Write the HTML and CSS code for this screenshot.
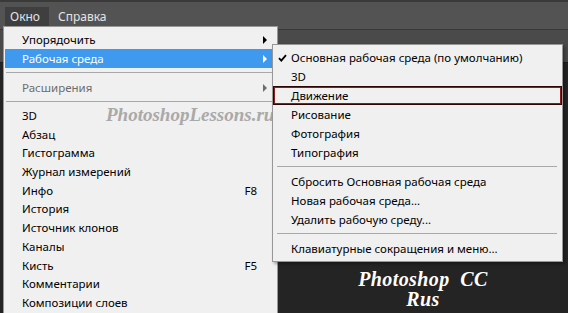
FILE: index.html
```html
<!DOCTYPE html>
<html lang="ru">
<head>
    <meta charset="UTF-8">
    <meta name="viewport" content="width=device-width, initial-scale=1.0">
    <title>Окно</title>
    <link rel="stylesheet" href="styles.css">
</head>
<body>
    <!-- App menu bar -->
    <div class="menubar">
        <span class="menubar-item active">Окно</span>
        <span class="menubar-item">Справка</span>
    </div>
    <div class="options-bar"></div>

    <!-- Document area -->
    <div class="workspace">
        <div class="caption">Photoshop&nbsp; CC</div>
        <div class="caption">Rus</div>
    </div>

    <!-- Window menu -->
    <ul class="menu main-menu">
        <li class="item has-sub">Упорядочить</li>
        <li class="item has-sub selected">Рабочая среда</li>
        <li class="sep"></li>
        <li class="item has-sub disabled">Расширения</li>
        <li class="sep"></li>
        <li class="item">3D</li>
        <li class="item">Абзац</li>
        <li class="item">Гистограмма</li>
        <li class="item">Журнал измерений</li>
        <li class="item">Инфо <span class="key">F8</span></li>
        <li class="item">История</li>
        <li class="item">Источник клонов</li>
        <li class="item">Каналы</li>
        <li class="item">Кисть <span class="key">F5</span></li>
        <li class="item">Комментарии</li>
        <li class="item">Композиции слоев</li>
    </ul>

    <div class="watermark">PhotoshopLessons.ru</div>

    <!-- Workspace submenu -->
    <ul class="menu sub-menu">
        <li class="item checked">
            <svg class="check" width="9" height="8" viewBox="0 0 9 8">
                <path d="M1 4.2 L3.3 6.6 L8 1.2" fill="none" stroke="#000" stroke-width="1.8"/>
            </svg>
            Основная рабочая среда (по умолчанию)
        </li>
        <li class="item">3D</li>
        <li class="item marked">Движение</li>
        <li class="item">Рисование</li>
        <li class="item">Фотография</li>
        <li class="item">Типография</li>
        <li class="sep"></li>
        <li class="item">Сбросить Основная рабочая среда</li>
        <li class="item">Новая рабочая среда...</li>
        <li class="item">Удалить рабочую среду...</li>
        <li class="sep"></li>
        <li class="item">Клавиатурные сокращения и меню...</li>
    </ul>
</body>
</html>
```

FILE: styles.css
```css
body {
    margin: 0;
    width: 568px;
    height: 313px;
    overflow: hidden;
    position: relative;
    background-color: #242424;
    font-family: "Noto Sans", "Segoe UI", sans-serif;
    font-size: 11.5px;
}

.menubar {
    height: 29px;
    box-sizing: border-box;
    background: #535353;
    border-top: 2px solid #3a3a3a;
    display: flex;
    align-items: flex-end;
    gap: 4px;
    padding: 0 0 3px 5px;
}

.menubar-item {
    color: #e4e4e4;
    font-size: 12px;
    height: 19px;
    line-height: 20px;
    padding: 0 9px 0 5px;
}

.menubar-item.active {
    background: #3f3f3f;
}

.options-bar {
    height: 32px;
    background: #4a4a4a;
    border-top: 1px solid #383838;
    border-bottom: 1px solid #1c1c1c;
}

.workspace {
    padding: 206px 0 0 278px;
    text-align: center;
}

.caption {
    color: #fff;
    font-family: "Liberation Serif", serif;
    font-style: italic;
    font-weight: bold;
    font-size: 20px;
    line-height: 20px;
    letter-spacing: 0.4px;
}

.menu {
    position: absolute;
    margin: 0;
    list-style: none;
    box-sizing: border-box;
    background: #f0f0f0;
    border: 1px solid #979797;
}

.main-menu {
    left: 3px;
    top: 26px;
    width: 275px;
    padding: 3px 1px;
}

.sub-menu {
    left: 272px;
    top: 44px;
    width: 291px;
    padding: 3px 0;
    box-shadow: 2px 2px 3px rgba(0, 0, 0, 0.35);
}

.item {
    position: relative;
    height: 19px;
    line-height: 19px;
    padding: 0 19px 0 17px;
    color: #000;
    white-space: nowrap;
    display: flex;
    justify-content: space-between;
}

/* the lower list is packed a bit tighter */
.main-menu .sep + .item ~ .item {
    height: 18.7px;
    line-height: 18.7px;
}

.sub-menu .item {
    padding-left: 18px;
}

.item.selected {
    background: #3e99ef;
    color: #fff;
}

.item.disabled {
    color: #6d6d6d;
}

.has-sub::after {
    content: "";
    position: absolute;
    right: 9px;
    top: 6px;
    border-left: 4px solid #000;
    border-top: 4px solid transparent;
    border-bottom: 4px solid transparent;
}

.selected::after {
    border-left-color: #fff;
}

.disabled::after {
    border-left-color: #6d6d6d;
}

.check {
    position: absolute;
    left: 5px;
    top: 6px;
}

.item.marked {
    box-shadow: inset 0 0 0 1px #2e0505, inset 0 0 0 2px #8a1c1c;
}

.sep {
    height: 1px;
    background: #a8a8a8;
    margin: 4px 1px 5px;
}

.sub-menu .sep {
    margin: 4px 5px 5px 4px;
}

.watermark {
    position: absolute;
    left: 106px;
    top: 104px;
    color: #a9a9a9;
    font-family: "Liberation Serif", serif;
    font-style: italic;
    font-weight: bold;
    font-size: 19px;
}
```
